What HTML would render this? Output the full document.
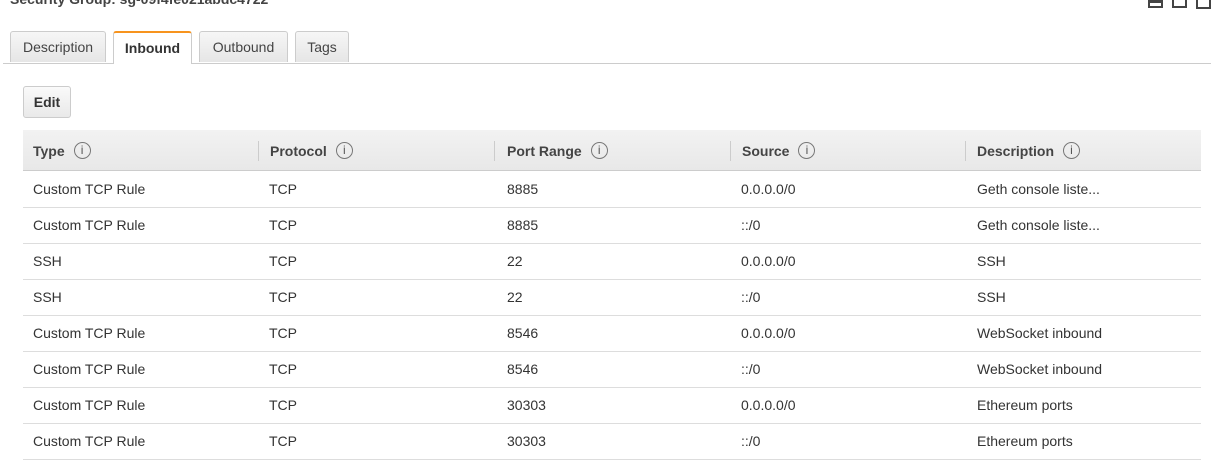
<!DOCTYPE html>
<html><head><style>
body{margin:0;width:1211px;height:473px;background:#fff;font-family:"Liberation Sans",Arial,sans-serif;color:#333;position:relative;overflow:hidden;font-size:14px}
.a{position:absolute}
.title{left:10px;top:-9px;font-weight:bold;font-size:14px;color:#444}
.tab{top:31px;height:31px;border:1px solid #ccc;border-bottom:none;background:linear-gradient(#f6f6f6,#e6e6e6);border-radius:3px 3px 0 0;box-sizing:border-box;text-align:center;line-height:31px;font-size:14px;color:#444}
.tab.on{background:#fff;border-top:2px solid #f7941e;font-weight:bold;height:33px;color:#333;line-height:31px}
.ic{top:0;width:15px;height:8px;border:2px solid #444;border-top:none;box-sizing:border-box}
.hd{left:23px;top:130px;width:1178px;height:41px;background:linear-gradient(#f2f2f2,#e8e8e8);border-bottom:1px solid #ccc;box-sizing:border-box}
.th{top:130px;height:41px;display:flex;align-items:center;font-weight:bold;font-size:14px;color:#444}
.info{display:inline-block;width:15px;height:15px;border:1px solid #777;border-radius:50%;font-size:12px;line-height:15px;text-align:center;font-weight:normal;margin-left:9px;color:#555}
.sep{top:141px;width:1px;height:20px;background:#ccc}
.row{left:23px;width:1178px;height:36px;border-bottom:1px solid #ddd;box-sizing:border-box}
.td{line-height:36px;font-size:14px;color:#333}
</style></head><body>
<div class="a title">Security Group: sg-09f4fe021abdc4722</div>
<div class="a ic" style="left:1148px;background:linear-gradient(#444 0 3px,transparent 3px)"></div>
<div class="a ic" style="left:1172px"></div>
<div class="a ic" style="left:1196px;height:9px"></div>
<div class="a" style="left:3px;top:63px;width:1208px;height:1px;background:#ccc"></div>
<div class="a tab" style="left:10px;width:96px">Description</div>
<div class="a tab on" style="left:113px;width:79px">Inbound</div>
<div class="a tab" style="left:199px;width:89px">Outbound</div>
<div class="a tab" style="left:295px;width:54px">Tags</div>
<div class="a" style="left:23px;top:86px;width:48px;height:32px;border:1px solid #ccc;border-radius:3px;box-sizing:border-box;background:linear-gradient(#fafafa,#e9e9e9);text-align:center;line-height:31px;font-weight:bold;font-size:14px">Edit</div>
<div class="a hd"></div>
<div class="a th" style="left:33px">Type<span class="info">i</span></div>
<div class="a th" style="left:270px">Protocol<span class="info">i</span></div>
<div class="a th" style="left:507px">Port Range<span class="info">i</span></div>
<div class="a th" style="left:742px">Source<span class="info">i</span></div>
<div class="a th" style="left:977px">Description<span class="info">i</span></div>
<div class="a sep" style="left:258px"></div>
<div class="a sep" style="left:494px"></div>
<div class="a sep" style="left:730px"></div>
<div class="a sep" style="left:965px"></div>
<div class="a row" style="top:172px"></div>
<div class="a row" style="top:208px"></div>
<div class="a row" style="top:244px"></div>
<div class="a row" style="top:280px"></div>
<div class="a row" style="top:316px"></div>
<div class="a row" style="top:352px"></div>
<div class="a row" style="top:388px"></div>
<div class="a row" style="top:424px"></div>

<div class="a td" style="top:171px;left:33px">Custom TCP Rule</div><div class="a td" style="top:171px;left:269px">TCP</div><div class="a td" style="top:171px;left:507px">8885</div><div class="a td" style="top:171px;left:741px">0.0.0.0/0</div><div class="a td" style="top:171px;left:977px">Geth console liste...</div>
<div class="a td" style="top:207px;left:33px">Custom TCP Rule</div><div class="a td" style="top:207px;left:269px">TCP</div><div class="a td" style="top:207px;left:507px">8885</div><div class="a td" style="top:207px;left:741px">::/0</div><div class="a td" style="top:207px;left:977px">Geth console liste...</div>
<div class="a td" style="top:243px;left:33px">SSH</div><div class="a td" style="top:243px;left:269px">TCP</div><div class="a td" style="top:243px;left:507px">22</div><div class="a td" style="top:243px;left:741px">0.0.0.0/0</div><div class="a td" style="top:243px;left:977px">SSH</div>
<div class="a td" style="top:279px;left:33px">SSH</div><div class="a td" style="top:279px;left:269px">TCP</div><div class="a td" style="top:279px;left:507px">22</div><div class="a td" style="top:279px;left:741px">::/0</div><div class="a td" style="top:279px;left:977px">SSH</div>
<div class="a td" style="top:315px;left:33px">Custom TCP Rule</div><div class="a td" style="top:315px;left:269px">TCP</div><div class="a td" style="top:315px;left:507px">8546</div><div class="a td" style="top:315px;left:741px">0.0.0.0/0</div><div class="a td" style="top:315px;left:977px">WebSocket inbound</div>
<div class="a td" style="top:351px;left:33px">Custom TCP Rule</div><div class="a td" style="top:351px;left:269px">TCP</div><div class="a td" style="top:351px;left:507px">8546</div><div class="a td" style="top:351px;left:741px">::/0</div><div class="a td" style="top:351px;left:977px">WebSocket inbound</div>
<div class="a td" style="top:387px;left:33px">Custom TCP Rule</div><div class="a td" style="top:387px;left:269px">TCP</div><div class="a td" style="top:387px;left:507px">30303</div><div class="a td" style="top:387px;left:741px">0.0.0.0/0</div><div class="a td" style="top:387px;left:977px">Ethereum ports</div>
<div class="a td" style="top:423px;left:33px">Custom TCP Rule</div><div class="a td" style="top:423px;left:269px">TCP</div><div class="a td" style="top:423px;left:507px">30303</div><div class="a td" style="top:423px;left:741px">::/0</div><div class="a td" style="top:423px;left:977px">Ethereum ports</div>
</body></html>
